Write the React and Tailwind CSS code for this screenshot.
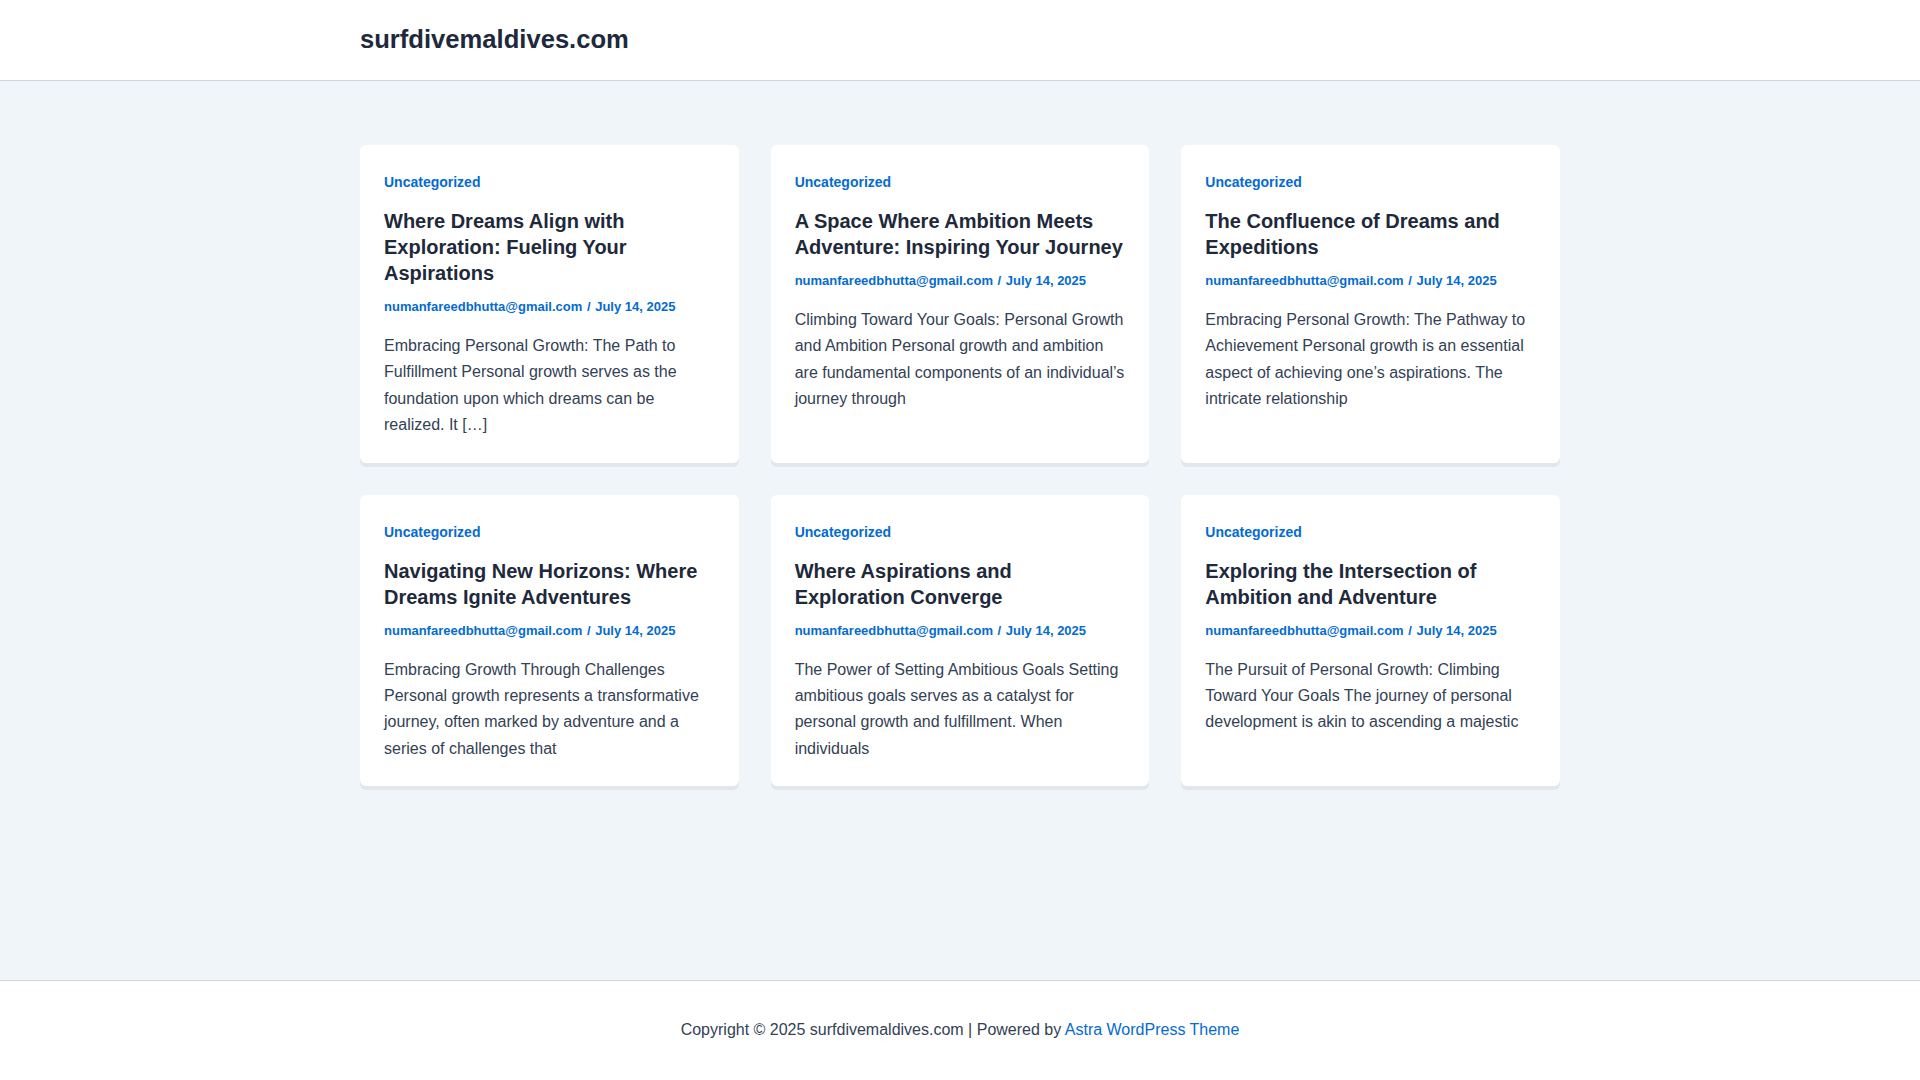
import React from "react";

const posts = [
  {
    title: "Where Dreams Align with Exploration: Fueling Your Aspirations",
    excerpt:
      "Embracing Personal Growth: The Path to Fulfillment Personal growth serves as the foundation upon which dreams can be realized. It […]",
  },
  {
    title: "A Space Where Ambition Meets Adventure: Inspiring Your Journey",
    excerpt:
      "Climbing Toward Your Goals: Personal Growth and Ambition Personal growth and ambition are fundamental components of an individual’s journey through",
  },
  {
    title: "The Confluence of Dreams and Expeditions",
    excerpt:
      "Embracing Personal Growth: The Pathway to Achievement Personal growth is an essential aspect of achieving one’s aspirations. The intricate relationship",
  },
  {
    title: "Navigating New Horizons: Where Dreams Ignite Adventures",
    excerpt:
      "Embracing Growth Through Challenges Personal growth represents a transformative journey, often marked by adventure and a series of challenges that",
  },
  {
    title: "Where Aspirations and Exploration Converge",
    excerpt:
      "The Power of Setting Ambitious Goals Setting ambitious goals serves as a catalyst for personal growth and fulfillment. When individuals",
  },
  {
    title: "Exploring the Intersection of Ambition and Adventure",
    excerpt:
      "The Pursuit of Personal Growth: Climbing Toward Your Goals The journey of personal development is akin to ascending a majestic",
  },
];

function Card({ post }) {
  return (
    <article className="bg-white rounded-[6px] px-6 pt-[25px] pb-6 shadow-[0_4px_0_0_rgba(16,24,40,0.06)]">
      <a href="#" className="block text-[14px] leading-[24px] font-bold text-[#046bd2]">
        Uncategorized
      </a>
      <h2 className="mt-[14px] text-[20px] leading-[26px] font-bold text-[#1e293b]">
        <a href="#">{post.title}</a>
      </h2>
      <div className="mt-[11px] text-[13px] leading-[20px] font-bold text-[#046bd2]">
        <a href="#">numanfareedbhutta@gmail.com</a>
        <span className="px-[1px]"> / </span>
        <span>July 14, 2025</span>
      </div>
      <p className="mt-[16px] text-[16px] leading-[26.4px] text-[#334155]">{post.excerpt}</p>
    </article>
  );
}

export default function App() {
  return (
    <div className="min-h-screen flex flex-col bg-[#f0f5fa] font-['Liberation_Sans',Arial,sans-serif]">
      <header className="h-[81px] bg-white border-b border-[#d1d5db]">
        <div className="w-[1200px] mx-auto h-full flex items-center pb-[2px]">
          <a href="#" className="text-[25.6px] leading-[1.2] font-bold text-[#1e293b]">
            surfdivemaldives.com
          </a>
        </div>
      </header>
      <main className="flex-1 pt-[64px]">
        <div className="w-[1200px] mx-auto grid grid-cols-3 gap-[32px]">
          {posts.map((p, i) => (
            <Card key={i} post={p} />
          ))}
        </div>
      </main>
      <footer className="h-[100px] bg-white border-t border-[#d1d5db] flex items-center justify-center text-[16px] leading-[26.4px] text-[#334155]">
        <span>
          Copyright © 2025 surfdivemaldives.com | Powered by{" "}
          <a href="#" className="text-[#046bd2]">
            Astra WordPress Theme
          </a>
        </span>
      </footer>
    </div>
  );
}
